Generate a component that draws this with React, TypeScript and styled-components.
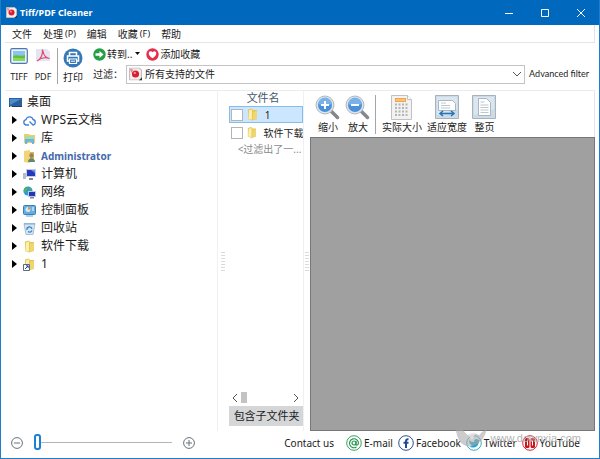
import React, { useState } from "react";
import styled, { createGlobalStyle, css } from "styled-components";

const GlobalStyle = createGlobalStyle`
  *, *::before, *::after { box-sizing: border-box; }
  body {
    margin: 0;
    background: #fff;
    color: #1c1c1c;
    font: 10px/14px "Noto Sans", "Noto Sans CJK SC", sans-serif;
  }
  button, input, select {
    margin: 0;
    padding: 0;
    border: 0;
    background: none;
    color: inherit;
    font: inherit;
  }
`;

const Window = styled.div`
  display: flex;
  flex-direction: column;
  min-height: 100vh;
  border: 1px solid #1f7ecb;
  border-top: 0;
`;

const TitleBar = styled.header`
  display: flex;
  align-items: center;
  height: 25px;
  padding-left: 5px;
  gap: 3px;
  background: #0069bd;
  color: #fff;
`;

const Title = styled.h1`
  flex: 1;
  margin: 0;
  font: bold 9px/14px "Noto Sans", sans-serif;
`;

const WindowControls = styled.div`
  display: flex;
`;

const WindowButton = styled.button`
  display: grid;
  place-items: center;
  width: 36px;
  height: 25px;
`;

const Content = styled.div`
  display: flex;
  flex: 1;
  flex-direction: column;
  padding: 0 4px;
`;

const MenuBar = styled.nav`
  display: flex;
  align-items: center;
  height: 18px;
  padding-left: 7px;
  gap: 11px;
  border: solid #e4e4e4;
  border-width: 0 1px 1px 0;
`;

const MenuButton = styled.button`
  display: flex;
  align-items: center;
  gap: 2px;
  white-space: nowrap;
`;

const Latin = styled.span`
  font-size: 9px;
`;

const Toolbar = styled.div`
  display: flex;
  height: 48px;
  border-bottom: 1px solid #ececec;
`;

const ToolButton = styled.button<{ $width: number }>`
  display: flex;
  flex-direction: column;
  align-items: center;
  justify-content: space-between;
  width: ${(p) => p.$width}px;
  white-space: nowrap;
`;

const BigTools = styled.div`
  display: flex;
  padding: 5px 0 6px 1px;
`;

const Divider = styled.span`
  width: 1px;
  margin: 0 4px 0 3px;
  background: #a5a5a5;
`;

const ToolRows = styled.div`
  display: flex;
  flex: 1;
  flex-direction: column;
  padding: 2px 0 0 9px;
  min-width: 0;
`;

const ToolRow = styled.div`
  display: flex;
  align-items: center;
  height: 18px;
  gap: 6px;
`;

const FilterRow = styled.div`
  display: flex;
  align-items: center;
  height: 22px;
  padding-right: 6px;
`;

const InlineButton = styled.button`
  display: flex;
  align-items: center;
  gap: 1px;
  white-space: nowrap;
`;

const FilterLabel = styled.label`
  width: 33px;
`;

const SelectBox = styled.div`
  position: relative;
  flex: 1;
  height: 19px;
  margin-right: 4px;
`;

const Select = styled.select`
  appearance: none;
  width: 100%;
  height: 100%;
  padding-left: 18px;
  border: 1px solid #c4c4c4;
`;

const SelectIcon = styled.span<{ $end?: boolean }>`
  position: absolute;
  top: 50%;
  ${(p) => (p.$end ? css`right: 3px;` : css`left: 3px;`)}
  display: flex;
  transform: translateY(-50%);
  pointer-events: none;
`;

const AdvancedButton = styled.button`
  font-family: Lato, sans-serif;
  font-size: 9px;
  white-space: nowrap;
`;

const Panels = styled.main`
  display: grid;
  flex: 1;
  grid-template-columns: minmax(0, 212fr) 12px minmax(0, 75fr) 7px minmax(0, 285fr);
`;

const Tree = styled.ul`
  margin: 0;
  padding: 2px 0 0 4px;
  list-style: none;
  font-size: 12px;
  line-height: 18px;
`;

const TreeButton = styled.button<{ $child?: boolean; $user?: boolean }>`
  display: flex;
  align-items: center;
  height: 18px;
  padding-left: ${(p) => (p.$child ? 3 : 0)}px;
  white-space: nowrap;
  ${(p) => p.$user && css`
    color: #4469ad;
    font-size: 10px;
    font-weight: bold;
  `}
`;

const Arrow = styled.span`
  width: 5px;
  height: 8px;
  margin-right: 6px;
  background: #000;
  clip-path: polygon(0 0, 100% 50%, 0 100%);
`;

const TreeIcon = styled.span`
  display: flex;
  margin-right: 5px;
`;

const Splitter = styled.div`
  display: grid;
  place-items: center;
  border-left: 1px solid #f0f0f0;
`;

const Grip = styled.span`
  width: 4px;
  height: 21px;
  background: radial-gradient(circle, #dadada 1px, transparent 1px) 0 0 / 2px 3px;
`;

const FilePanel = styled.section`
  display: flex;
  flex-direction: column;
  overflow: hidden;
`;

const FileTable = styled.table`
  width: 100%;
  border-collapse: collapse;
  table-layout: fixed;
  white-space: nowrap;
`;

const FileHead = styled.th`
  height: 15px;
  padding: 0 0 0 18px;
  color: #44586b;
  font-size: 11px;
  font-weight: normal;
  line-height: 14px;
  text-align: left;
  vertical-align: top;
`;

const FileRow = styled.tr<{ $selected?: boolean }>`
  height: ${(p) => (p.$selected ? 17 : 19)}px;
  ${(p) => p.$selected && css`
    background: #cde6ff;
    box-shadow: inset 0 0 0 1px #84bdec;
  `}
`;

const FileCell = styled.td`
  padding: 0;
`;

const FileLabel = styled.label`
  display: flex;
  align-items: center;
  padding-left: 2px;
  gap: 3px;
`;

const Check = styled.input`
  appearance: none;
  flex: none;
  width: 12px;
  height: 12px;
  border: 1px solid #b4b4b4;
  background: #fff;
  &:checked { background: #2f7fc8; }
`;

const FileName = styled.span`
  padding-left: 3px;
`;

const FilterNote = styled.p`
  margin: 0;
  padding-left: 9px;
  color: #8a8a8a;
  white-space: nowrap;
`;

const ScrollRow = styled.div`
  display: flex;
  align-items: center;
  height: 17px;
  margin-top: auto;
  padding: 0 4px 0 3px;
`;

const ScrollThumb = styled.span`
  width: 6px;
  height: 11px;
  margin: 0 auto 0 3px;
  background: #c3c3c3;
`;

const SubfolderButton = styled.button`
  height: 20px;
  margin-bottom: 5px;
  padding-left: 5px;
  background: #d5d6d8;
  font-size: 11px;
  line-height: 18px;
  text-align: left;
  white-space: nowrap;
`;

const Viewer = styled.section`
  display: flex;
  flex-direction: column;
`;

const ViewerTools = styled.div`
  display: flex;
  height: 46px;
  padding: 4px 0 3px 2px;
  border-right: 1px solid #e4e4e4;
`;

const Canvas = styled.div`
  flex: 1;
  border: 1px solid #777;
  background: #a0a0a0;
`;

const Footer = styled.footer`
  position: relative;
  display: flex;
  align-items: center;
  justify-content: space-between;
  height: 27px;
  padding: 0 15px 4px 6px;
`;

const Zoom = styled.div`
  display: flex;
  align-items: center;
  gap: 11px;
`;

const IconButton = styled.button`
  display: flex;
`;

const Range = styled.input`
  appearance: none;
  width: 138px;
  height: 18px;
  &::-webkit-slider-runnable-track {
    height: 1px;
    background: #b5b5b5;
  }
  &::-webkit-slider-thumb {
    appearance: none;
    width: 7px;
    height: 16px;
    margin-top: -8px;
    border: 2px solid #1b7fd3;
    border-radius: 3px;
    background: #fff;
  }
`;

const Links = styled.div`
  display: flex;
  align-items: center;
  gap: 5px;
`;

const ContactText = styled.span`
  margin-right: 7px;
`;

const SocialLink = styled.a`
  display: flex;
  align-items: center;
  gap: 2px;
  color: inherit;
  text-decoration: none;
`;

const Watermark = styled.div`
  position: absolute;
  right: 14px;
  bottom: 11px;
  display: flex;
  align-items: center;
  gap: 2px;
  color: #b4b4b4;
  font: 11px/14px "Liberation Sans", sans-serif;
  pointer-events: none;
`;

const AppIcon = ({ size = 12 }: { size?: number }) => (
  <svg width={size} height={size} viewBox="0 0 12 12">
    <path d="M.5.5h9l2 2v9H.5z" fill="#f5eded" stroke="#c5bcbc" />
    <path d="M1 1l3 1-2 3z" fill="#d98c8c" />
    <circle cx="6" cy="6" r="3.3" fill="#d91d32" />
    <circle cx="5.3" cy="5" r="1.1" fill="#f58b92" />
    <path d="M9 12l3-3v3z" fill="#333" />
  </svg>
);

const TiffIcon = () => (
  <svg width="18" height="16" viewBox="0 0 18 16">
    <rect x=".7" y=".7" width="16.6" height="14.6" rx="1.5" fill="#eaf3fc" stroke="#4d78ae" strokeWidth="1.2" />
    <path d="M3 3h12v10H3z" fill="#8fc2ef" />
    <path d="M3 8c4-2 8 1 12-1v6H3z" fill="#5cc13d" />
    <path d="M3 10c4-1 8 1 12 0v3H3z" fill="#8ad95c" />
  </svg>
);

const PdfIcon = () => (
  <svg width="14" height="16" viewBox="0 0 14 16">
    <path d="M0 1h11l3 3v9H0z" fill="#e5e4f0" />
    <path d="M1 13c4-2 6-7 5.500-11.500C8 9 10 9.500 13.500 10.500 9 9 5 9.500 1 13" fill="none" stroke="#df4a70" strokeWidth="1.2" />
  </svg>
);

const PrintIcon = () => (
  <svg width="20" height="20" viewBox="0 0 20 20">
    <circle cx="10" cy="10" r="9.500" fill="#3478b8" />
    <path d="M6.500 8V4.500h7V8M6.500 13H4.500V8h11v5h-2" fill="none" stroke="#fff" strokeWidth="1.500" />
    <path d="M6.500 11h7v4.500h-7z" fill="#3478b8" stroke="#fff" strokeWidth="1.200" />
    <path d="M8 13.200h4" stroke="#fff" />
  </svg>
);

const GoIcon = () => (
  <svg width="13" height="13" viewBox="0 0 13 13">
    <circle cx="6.500" cy="6.500" r="6.200" fill="#23a046" />
    <path d="M2.500 5.300h4V3l4 3.500-4 3.500V7.700h-4z" fill="#fff" />
  </svg>
);

const HeartIcon = () => (
  <svg width="13" height="13" viewBox="0 0 13 13">
    <circle cx="6.500" cy="6.500" r="6.200" fill="#e32f4b" />
    <path d="M6.500 10.300C-.5 6 4 1.200 6.500 4.200 9 1.200 13.500 6 6.500 10.300" fill="#fff" />
  </svg>
);

const FolderIcon = ({ shortcut = false }: { shortcut?: boolean }) => (
  <svg width="13" height="13" viewBox="0 0 13 13">
    <path d="M2 1.500l4-1 1 1.500h4v9L6 12.500 2 11z" fill="#e5c957" />
    <path d="M3 2.500l3-1v10L2.500 11z" fill="#fbf0b1" />
    <path d="M7 4l4-1v7.500l-4 1.500z" fill="#f0d671" />
    {shortcut && (
      <g>
        <path d="M.5 6.500h6v6h-6z" fill="#fff" stroke="#5a6b7f" />
        <path d="M2 11l3-3M3 7.800h2.200V10" fill="none" stroke="#214d9c" />
      </g>
    )}
  </svg>
);

const treeIcons: Record<string, React.ReactNode> = {
  desktop: <g><path d="M0 2h13v9H0z" fill="#2b5f9e" /><path d="M1 3h11L1 9z" fill="#4c8ccd" /><path d="M0 10h13v1H0z" fill="#263b5c" /><path d="M1 10h2v1H1z" fill="#9bd56c" /></g>,
  cloud: <path d="M6 11H3a2.700 2.700 0 0 1 0-5.300A3.600 3.600 0 0 1 10 5.500 2.800 2.800 0 0 1 10 11L6.500 7.500" fill="none" stroke="#3f7fda" strokeWidth="1.300" />,
  library: <g><path d="M1 2h5l1 1h5v8H1z" fill="#efcd69" /><path d="M2 4h9v5H2z" fill="#a6ddb0" /><path d="M2 12V7h9v5H9a2.500 2.500 0 0 0-5 0z" fill="#6cb5de" /></g>,
  user: <g><path d="M1 1l6-1v13l-6-1z" fill="#f1d574" /><path d="M7 2h4v10H7z" fill="#dbb755" /><circle cx="8.500" cy="5.500" r="2.200" fill="#9f7f61" /><path d="M5 12c0-5 7-5 7 0z" fill="#5c8972" /></g>,
  computer: <g><path d="M0 5h3v6H0z" fill="#b7bdc8" /><path d="M3 1h10v8H3z" fill="#c8cddb" /><path d="M4 2h8v6H4z" fill="#2439bc" /><path d="M8 2h4v3z" fill="#6f8ff1" /><path d="M6 10h4v2H6z" fill="#7f8795" /></g>,
  network: <g><circle cx="5" cy="5" r="4.600" fill="#319bd4" /><path d="M2 1.500c4 0 3 2 1 3.500S2 8 1 6zM6 1l3 2-2 2z" fill="#59b44d" /><path d="M5 5h8v6H5z" fill="#c2c9dc" /><path d="M6 6h6v4H6z" fill="#2038b5" /><path d="M7 11h4v1.500H7z" fill="#7d8798" /></g>,
  control: <g><rect x=".5" y="1.500" width="12" height="9" rx="1" fill="#65aee0" stroke="#3e7eb4" /><circle cx="5" cy="5.500" r="2.500" fill="#cdeaf9" /><path d="M5 5.500V3a2.500 2.500 0 0 1 2.500 2.500z" fill="#f08b36" /><path d="M9 4h2M9 6h2" stroke="#fff" /><path d="M3 12h7" stroke="#6d9fc4" /></g>,
  recycle: <g><path d="M1 1.500h11l-2 11H3z" fill="#d7e7f2" stroke="#98b3c9" strokeWidth=".8" /><path d="M1 2h11" stroke="#8ba9c2" /><path d="M4 8a2.500 2.500 0 0 1 5-1M9 8.500a2.500 2.500 0 0 1-4 1" fill="none" stroke="#3c87d1" strokeWidth="1.300" /></g>,
};

const Glass = ({ plus = false }: { plus?: boolean }) => (
  <svg width="25" height="25" viewBox="0 0 25 25">
    <path d="M16 16l6.500 6.500" stroke="#85878a" strokeWidth="3.500" strokeLinecap="round" />
    <circle cx="10" cy="10" r="9" fill="#dbe4ec" stroke="#b3b8bd" />
    <circle cx="10" cy="10" r="7" fill="#4a91dc" />
    <path d="M3.500 9a6.500 6.500 0 0 1 13 0c-4 2-9 2-13 0" fill="#79b2ea" />
    <path d={plus ? "M6 10h8M10 6v8" : "M6 10h8"} stroke="#fff" strokeWidth="2" />
  </svg>
);

const ActualIcon = () => (
  <svg width="21" height="25" viewBox="0 0 21 25">
    <path d="M.5.5h16l4 4v20H.5z" fill="#f2f2f2" stroke="#c1c1c1" />
    <path d="M16.500.5v4h4" fill="#fff" stroke="#c1c1c1" />
    <path d="M4 3h11v4H4z" fill="#f5a348" />
    <path d="M5 5h9" stroke="#ffe0b5" />
    <path d="M4 9.500h13M4 13h13M4 16.500h13M4 20h13" stroke="#b5b5b5" strokeWidth="2" strokeDasharray="2 1.500" />
  </svg>
);

const PageIcon = ({ wide = false }: { wide?: boolean }) => (
  <svg width="24" height="24" viewBox="0 0 24 24">
    <path d="M.5.5h23v23H.5z" fill="#ccdbe7" stroke="#a8b2ba" />
    <path d="M2 2h20v12L2 20z" fill="#dae7f0" />
    <path d={wide ? "M3.500 5.500h14l3 3v7h-17z" : "M6.500 3.500h8l4 4v13h-12z"} fill="#fff" stroke="#a9b5c0" />
    {wide ? (
      <g><path d="M6 8h5M6 10.500h9M6 13h9" stroke="#bbc6cf" /><path d="M5 18.500h14M8 16l-3 2.500L8 21M16 16l3 2.500-3 2.500" fill="none" stroke="#2474b8" strokeWidth="1.500" /></g>
    ) : (
      <path d="M8.500 7h4M8.500 10h8M8.500 12.500h8M8.500 15h8M8.500 17.500h8" stroke="#bbc6cf" />
    )}
  </svg>
);

const ZoomIcon = ({ plus = false }: { plus?: boolean }) => (
  <svg width="12" height="12" viewBox="0 0 12 12" fill="none" stroke="#68737c">
    <circle cx="6" cy="6" r="5.400" />
    <path d={plus ? "M3 6h6M6 3v6" : "M3 6h6"} />
  </svg>
);

const Chevron = ({ d, width = 6, height = 8 }: { d: string; width?: number; height?: number }) => (
  <svg width={width} height={height} viewBox={`0 0 ${width} ${height}`} fill="none" stroke="#555">
    <path d={d} />
  </svg>
);

const socialIcons: Record<string, React.ReactNode> = {
  "E-mail": <g><circle cx="8" cy="8" r="7.300" fill="#fff" stroke="#36a35c" /><circle cx="8" cy="8" r="2" fill="none" stroke="#279650" strokeWidth="1.200" /><path d="M10 6v3c0 2 2.500 1 2.500-1A4.500 4.500 0 1 0 10.500 12" fill="none" stroke="#279650" strokeWidth="1.200" /></g>,
  Facebook: <g><circle cx="8" cy="8" r="7.300" fill="#fff" stroke="#2d5193" /><path d="M8 13V6q0-2 2.500-1.700M5.500 7.700h5" fill="none" stroke="#234a91" strokeWidth="2" /></g>,
  Twitter: <g><circle cx="8" cy="8" r="7.300" fill="#fff" stroke="#39abc9" /><path d="M3 5c2 2 3 2 5 2 0-3 3-4 4.500-2l1.500-.3-1.200 1.800C13 12 7 14 3 11.500c2 0 2-.5 3-1C4 9.500 3 7.500 3 5" fill="#27a4ca" /></g>,
  YouTube: <g><circle cx="8" cy="8" r="7.300" fill="#fff" stroke="#d12a32" /><rect x="3" y="3" width="4.500" height="10" rx="1.500" fill="#c9151e" /><rect x="8.500" y="3" width="4.500" height="10" rx="1.500" fill="#c9151e" /><path d="M5.500 5.500v5M10.500 5.500v5" stroke="#fff" /></g>,
};

const treeItems = [
  ["cloud", "WPS云文档"],
  ["library", "库"],
  ["user", "Administrator"],
  ["computer", "计算机"],
  ["network", "网络"],
  ["control", "控制面板"],
  ["recycle", "回收站"],
  ["folder", "软件下载"],
  ["shortcut", "1"],
];

const menus = [["文件"], ["处理", "(P)"], ["编辑"], ["收藏", "(F)"], ["帮助"]];

const windowControls = [
  ["最小化", "M1 5.500h8"],
  ["最大化", "M1.500 1.500h7v7h-7z"],
  ["关闭", "M1 1l8 8M9 1l-8 8"],
];

const TreeGlyph = ({ name }: { name: string }) =>
  name === "folder" || name === "shortcut" ? (
    <FolderIcon shortcut={name === "shortcut"} />
  ) : (
    <svg width="13" height="13" viewBox="0 0 13 13">{treeIcons[name]}</svg>
  );

export default function App() {
  const [zoom, setZoom] = useState(0);
  return (
    <>
      <GlobalStyle />
      <Window>
        <TitleBar>
          <AppIcon size={11} />
          <Title>Tiff/PDF Cleaner</Title>
          <WindowControls>
            {windowControls.map(([label, d]) => (
              <WindowButton key={label} aria-label={label}>
                <svg width="10" height="10" viewBox="0 0 10 10" fill="none" stroke="#fff"><path d={d} /></svg>
              </WindowButton>
            ))}
          </WindowControls>
        </TitleBar>
        <Content>
          <MenuBar>
            {menus.map(([label, key]) => (
              <MenuButton key={label}>{label}{key && <Latin>{key}</Latin>}</MenuButton>
            ))}
          </MenuBar>
          <Toolbar>
            <BigTools>
              <ToolButton $width={26}><TiffIcon /><Latin>TIFF</Latin></ToolButton>
              <ToolButton $width={22}><PdfIcon /><Latin>PDF</Latin></ToolButton>
              <Divider />
              <ToolButton $width={22}><PrintIcon />打印</ToolButton>
            </BigTools>
            <ToolRows>
              <ToolRow>
                <InlineButton>
                  <GoIcon />转到..
                  <svg width="7" height="4" viewBox="0 0 7 4"><path d="M2 0h5L4.500 3z" fill="#111" /></svg>
                </InlineButton>
                <InlineButton><HeartIcon />添加收藏</InlineButton>
              </ToolRow>
              <FilterRow>
                <FilterLabel htmlFor="filter">过滤：</FilterLabel>
                <SelectBox>
                  <Select id="filter"><option>所有支持的文件</option></Select>
                  <SelectIcon><AppIcon size={13} /></SelectIcon>
                  <SelectIcon $end><Chevron d="M1 1l4 4 4-4" width={10} height={6} /></SelectIcon>
                </SelectBox>
                <AdvancedButton>Advanced filter</AdvancedButton>
              </FilterRow>
            </ToolRows>
          </Toolbar>
          <Panels>
            <Tree>
              <li><TreeButton><TreeIcon><TreeGlyph name="desktop" /></TreeIcon>桌面</TreeButton></li>
              {treeItems.map(([icon, label]) => (
                <li key={label}>
                  <TreeButton $child $user={icon === "user"}>
                    <Arrow /><TreeIcon><TreeGlyph name={icon} /></TreeIcon>{label}
                  </TreeButton>
                </li>
              ))}
            </Tree>
            <Splitter><Grip /></Splitter>
            <FilePanel>
              <FileTable>
                <thead><tr><FileHead>文件名</FileHead></tr></thead>
                <tbody>
                  {["1", "软件下载"].map((name, i) => (
                    <FileRow key={name} $selected={i === 0}>
                      <FileCell>
                        <FileLabel><Check type="checkbox" /><FolderIcon /><FileName>{name}</FileName></FileLabel>
                      </FileCell>
                    </FileRow>
                  ))}
                </tbody>
              </FileTable>
              <FilterNote>&lt;过滤出了一...</FilterNote>
              <ScrollRow>
                <Chevron d="M5 0L1 4l4 4" /><ScrollThumb /><Chevron d="M1 0l4 4-4 4" />
              </ScrollRow>
              <SubfolderButton>包含子文件夹</SubfolderButton>
            </FilePanel>
            <Splitter><Grip /></Splitter>
            <Viewer>
              <ViewerTools>
                <ToolButton $width={31}><Glass plus />缩小</ToolButton>
                <ToolButton $width={29}><Glass />放大</ToolButton>
                <Divider />
                <ToolButton $width={43}><ActualIcon />实际大小</ToolButton>
                <ToolButton $width={47}><PageIcon wide />适应宽度</ToolButton>
                <ToolButton $width={28}><PageIcon />整页</ToolButton>
              </ViewerTools>
              <Canvas />
            </Viewer>
          </Panels>
          <Footer>
            <Zoom>
              <IconButton aria-label="缩小"><ZoomIcon /></IconButton>
              <Range type="range" aria-label="缩放" value={zoom} onChange={(e) => setZoom(Number(e.target.value))} />
              <IconButton aria-label="放大"><ZoomIcon plus /></IconButton>
            </Zoom>
            <Links>
              <ContactText>Contact us</ContactText>
              {Object.keys(socialIcons).map((name) => (
                <SocialLink key={name} href="#">
                  <svg width="16" height="16" viewBox="0 0 16 16">{socialIcons[name]}</svg>{name}
                </SocialLink>
              ))}
            </Links>
            <Watermark>
              <svg width="34" height="18" viewBox="0 0 36 20"><path d="M0 1h8l5 6c4-3 9-3 13 0l3-4 5-2c-2 11-10 18-19 18S2 12 0 1" fill="#aaa" opacity=".6" /><path d="M13 6l10-3-5 9z" fill="#eee" opacity=".6" /></svg>
              www.downxia.com
            </Watermark>
          </Footer>
        </Content>
      </Window>
    </>
  );
}
